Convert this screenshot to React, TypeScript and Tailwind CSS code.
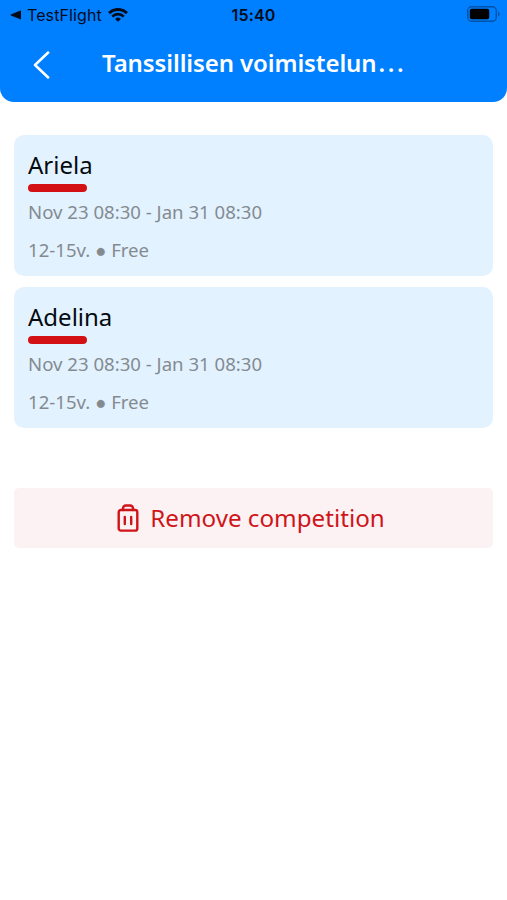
type Competition = {
  name: string;
  period: string;
  category: string;
  price: string;
};

const competitions: Competition[] = [
  {
    name: "Ariela",
    period: "Nov 23 08:30 - Jan 31 08:30",
    category: "12-15v.",
    price: "Free",
  },
  {
    name: "Adelina",
    period: "Nov 23 08:30 - Jan 31 08:30",
    category: "12-15v.",
    price: "Free",
  },
];

const WifiIcon = () => (
  <svg width="20" height="14" viewBox="0 0 20 14" fill="none" stroke="#000b1c">
    <path d="M1.1 5.1a12.6 12.6 0 0 1 17.8 0" strokeWidth="3" />
    <path d="M4.3 8.6a8 8 0 0 1 11.4 0" strokeWidth="2.7" />
    <path d="M10 13.8 7.1 10.9a4.1 4.1 0 0 1 5.8 0z" fill="#000b1c" stroke="none" />
  </svg>
);

const BatteryIcon = () => (
  <svg width="33" height="16" viewBox="0 0 33 16" fill="none">
    <rect x="0.7" y="0.7" width="28.6" height="14.6" rx="4" stroke="#0053a8" strokeWidth="1.4" />
    <rect x="2.8" y="2.8" width="19.4" height="10.4" rx="2" fill="#000" />
    <path d="M31 5.5v5c1-.5 1.6-1.4 1.6-2.5S32 6 31 5.5z" fill="#0053a8" />
  </svg>
);

const TrashIcon = () => (
  <svg
    width="24"
    height="30"
    viewBox="0 0 24 30"
    fill="none"
    stroke="#cf1519"
    strokeWidth="2.4"
    strokeLinecap="round"
    strokeLinejoin="round"
  >
    <rect x="2.7" y="7" width="18.6" height="20.6" rx="2.2" />
    <path d="M7 7V5.2a2.7 2.7 0 0 1 2.7-2.7h4.6A2.7 2.7 0 0 1 17 5.2V7" />
    <path d="M8.8 14v7M15.2 14v7" />
  </svg>
);

const StatusBar = () => (
  <div className="grid grid-cols-3 items-center h-[30px] pl-[10px] pr-[7px] font-['Inter','Liberation_Sans',sans-serif] text-[#000b1c]">
    <div className="flex items-center">
      <svg width="12" height="10" viewBox="0 0 12 10" fill="#000b1c">
        <path d="M.8 4.5 11 .2v9.3L.8 5.500q-.6-.5 0-1z" />
      </svg>
      <span className="ml-[5px] w-[76px] text-[16px] leading-5 tracking-[0.1px] whitespace-nowrap">
        TestFlight
      </span>
      <span className="ml-[5px]">
        <WifiIcon />
      </span>
    </div>
    <span className="-ml-[3px] text-center text-[16px] leading-5 font-semibold tracking-[0.2px]">
      15:40
    </span>
    <div className="flex justify-end pb-[2px]">
      <BatteryIcon />
    </div>
  </div>
);

const Header = () => (
  <header className="h-[102px] rounded-b-[14px] bg-[#007fff]">
    <StatusBar />
    <div className="flex items-center h-[68px] pl-[33px]">
      <svg
        width="17"
        height="28"
        viewBox="0 0 17 28"
        fill="none"
        stroke="#fff"
        strokeWidth="2.5"
        strokeLinecap="round"
        strokeLinejoin="round"
        className="mt-[2px]"
      >
        <path d="M15.2 1.5 2 14l13.2 12.5" />
      </svg>
      <h1 className="ml-[52px] -mt-[2px] text-[24px] leading-8 font-semibold tracking-[-0.1px] whitespace-nowrap text-white">
        Tanssillisen voimistelun<span className="ml-[2px] tracking-[2.6px]">...</span>
      </h1>
    </div>
  </header>
);

const CompetitionCard = ({ name, period, category, price }: Competition) => (
  <div className="h-[141px] rounded-[10px] bg-[#e3f2ff] px-[14px] pt-[13px]">
    <p className="text-[24px] leading-[33px] text-[#050b10]">{name}</p>
    <div className="mt-[3px] h-2 w-[59px] rounded-full bg-[#d31115]" />
    <p className="mt-[7px] text-[18.6px] leading-[26px] text-[#838b90]">{period}</p>
    <p className="mt-3 text-[18.6px] leading-[26px] text-[#838b90]">
      {category} ● {price}
    </p>
  </div>
);

const App = () => {
  return (
    <div className="h-[900px] w-[507px] bg-white font-['Noto_Sans',sans-serif]">
      <Header />
      <main className="px-[14px] pt-[33px]">
        <div className="flex flex-col gap-[11px]">
          {competitions.map((competition) => (
            <CompetitionCard key={competition.name} {...competition} />
          ))}
        </div>
        <button className="mt-[60px] flex h-[60px] w-full items-center justify-center gap-[10px] rounded-[5px] bg-[#fcf2f3] pr-[6px] text-[24.2px] text-[#cf1519]">
          <TrashIcon />
          <span className="pt-px">Remove competition</span>
        </button>
      </main>
    </div>
  );
};

export default App;
